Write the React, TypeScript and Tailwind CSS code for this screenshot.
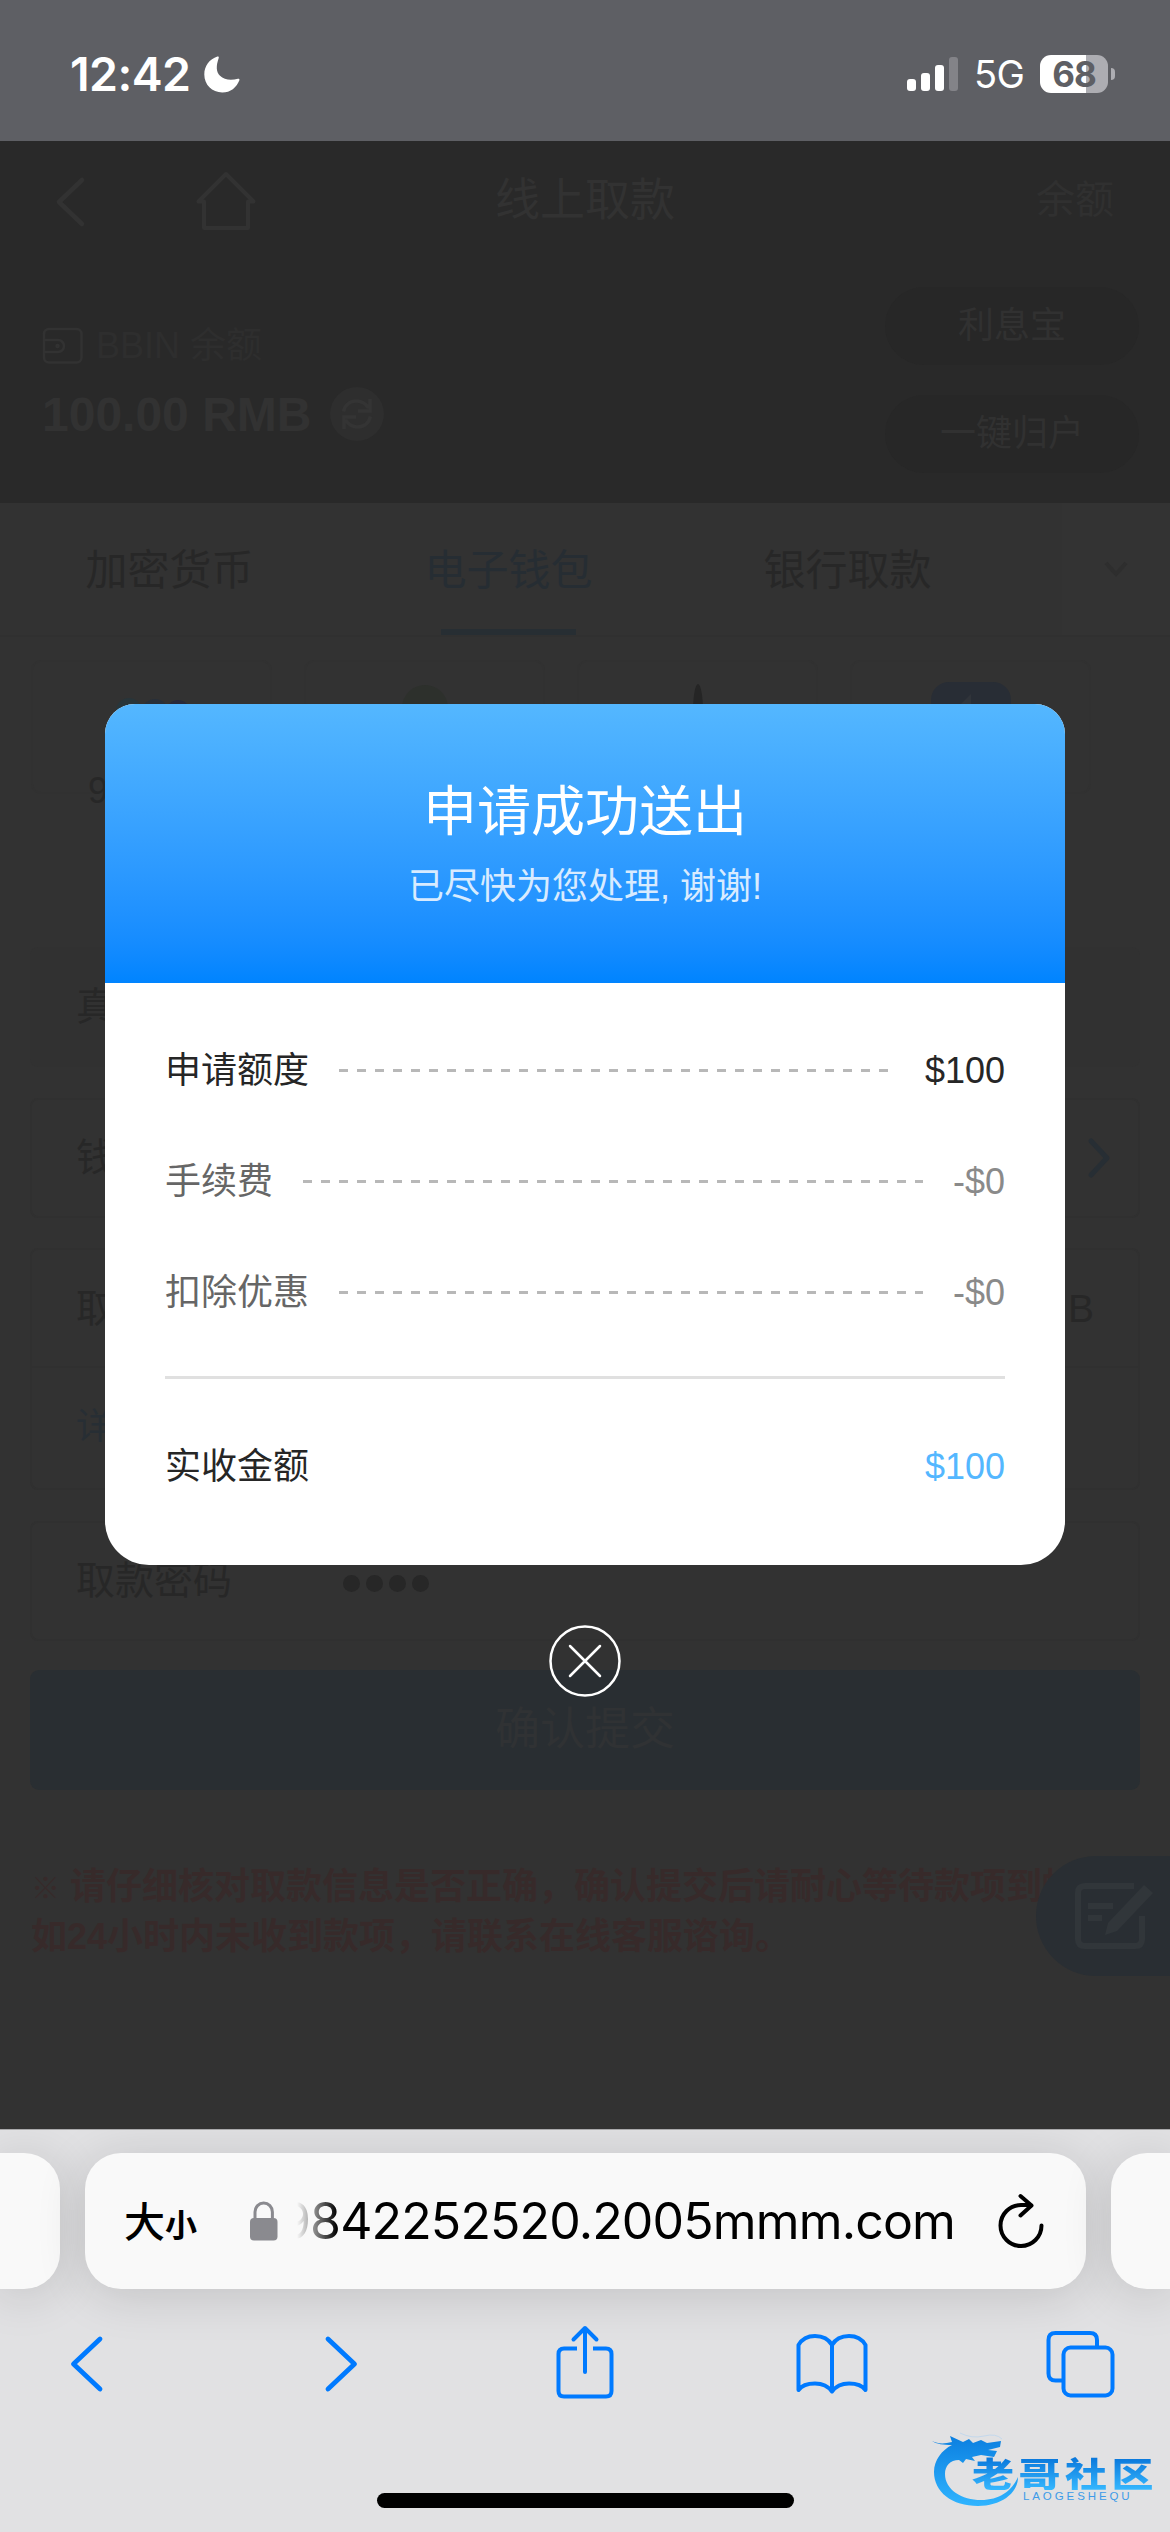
import React from 'react';

const tabs = ['加密货币', '电子钱包', '银行取款'];

const details = [
  { label: '申请额度', value: '$100', labelClass: 'text-[#262626]', valueClass: 'text-[#262626]' },
  { label: '手续费', value: '-$0', labelClass: 'text-[#666666]', valueClass: 'text-[#8a8a8a]' },
  { label: '扣除优惠', value: '-$0', labelClass: 'text-[#666666]', valueClass: 'text-[#8a8a8a]' },
];

const StatusBar: React.FC = () => (
  <header className="flex h-[141px] shrink-0 items-start justify-between bg-[#5e5f64] font-['Inter',sans-serif] text-white">
    <div className="flex items-center pl-[70px] pt-[50px]">
      <span className="w-[125px] text-[46.5px] font-semibold leading-[48px] tracking-[-0.6px]">12:42</span>
      <svg className="ml-[9px]" width="36" height="37" viewBox="0 0 36 37" fill="currentColor">
        <path d="M13.4.6c1-.4 1.700.3 1.300 1.300C12 10 12 15.500 16 19.800c4.300 4.300 11 5 18 3 1-.3 1.800.4 1.400 1.400C32.500 31.500 26.500 36.500 18.300 36.500 8 36.500.3 28.800.3 18.600.3 10 5.500 3.200 13.400.6z" />
      </svg>
    </div>
    <div className="flex items-center pr-[55px] pt-[50px]">
      <div className="mt-[-1px] flex h-[34px] items-end gap-[5px]">
        <i className="h-[12px] w-[9px] rounded-[3px] bg-white" />
        <i className="h-[18px] w-[9px] rounded-[3px] bg-white" />
        <i className="h-[26px] w-[9px] rounded-[3px] bg-white" />
        <i className="h-[34px] w-[9px] rounded-[3px] bg-[#838388]" />
      </div>
      <span className="ml-[16px] w-[66px] text-[38px] leading-[48px] tracking-[-0.5px]">5G</span>
      <div className="flex h-[38px] w-[68px] items-center justify-center rounded-[11px] bg-linear-to-r from-white from-[68%] to-[#adadb2] to-[68%] text-[35px] font-bold leading-[38px] tracking-[-1px] text-[#5e5f64]">
        68
      </div>
      <i className="ml-[3px] h-[12px] w-[4px] rounded-r-full bg-[#adadb2]" />
    </div>
  </header>
);

const AccountPanel: React.FC = () => (
  <div className="h-[362px] shrink-0 bg-[#292929] text-[#323232]">
    <div className="flex h-[116px] items-center">
      <svg className="ml-[55px] mt-[5px]" width="32" height="54" viewBox="0 0 32 54" fill="none" stroke="currentColor" strokeWidth="4.500" strokeLinecap="round" strokeLinejoin="round">
        <path d="M27 5 4 27l23 22" />
      </svg>
      <svg className="ml-[108px] mt-[4px]" width="62" height="60" viewBox="0 0 62 60" fill="none" stroke="currentColor" strokeWidth="4" strokeLinejoin="round">
        <path d="M31 3 3.500 30.500H9V57h44V30.500h5.500z" />
      </svg>
      <h1 className="ml-[238px] pt-[4px] text-[45px] leading-[60px]">线上取款</h1>
      <span className="ml-auto pr-[56px] pt-[2px] text-[39px] leading-[60px] text-[#303030]">余额</span>
    </div>
    <div className="flex justify-between pl-[42px] pr-[31px]">
      <div className="pt-[63px]">
        <div className="flex h-[52px] items-center text-[36px]">
          <svg width="42" height="38" viewBox="0 0 42 38" fill="none" stroke="currentColor" strokeWidth="2.500">
            <rect x="2" y="2" width="37.500" height="33.500" rx="5" />
            <path d="M2 13h14a6 6 0 0 1 0 12H2" />
            <circle cx="15.500" cy="19" r="1" />
          </svg>
          <span className="ml-[12px] leading-[52px] text-[#2e2e2e]">BBIN 余额</span>
        </div>
        <div className="mt-[14px] flex items-center">
          <span className="pt-[2px] text-[48px] font-bold leading-[54px]">100.00 RMB</span>
          <span className="ml-[19px] flex size-[54px] items-center justify-center rounded-full bg-[#2e2e2e]">
            <svg width="32" height="32" viewBox="0 0 32 32" fill="none" stroke="#343434" strokeWidth="3.500">
              <path d="M2.500 13.500C4 7 9 3 15.500 3c5 0 9 2.500 12 7M29 1v12H17" />
              <path d="M29.500 18.500C28 25 23 29 16.500 29c-5 0-9-2.500-12-7M3 31V19h12" />
            </svg>
          </span>
        </div>
      </div>
      <div className="flex flex-col gap-[30px] pt-[30px] text-center text-[36px] leading-[78px] text-[#313131]">
        <div className="h-[78px] w-[254px] rounded-full bg-[#272727]">利息宝</div>
        <div className="h-[78px] w-[254px] rounded-full bg-[#272727]">一键归户</div>
      </div>
    </div>
  </div>
);

const WalletTabs: React.FC = () => (
  <nav className="flex h-[134px] shrink-0 justify-between border-b-2 border-[#303030]">
    <div className="flex">
      {tabs.map((tab, i) => (
        <div
          key={tab}
          className={`flex w-[339px] flex-col items-center pt-[38px] text-[42px] leading-[60px] ${i === 1 ? 'text-[#262d33]' : 'text-[#272727]'}`}
        >
          {tab}
          {i === 1 && <i className="mt-[28px] h-[6px] w-[135px] bg-[#272e33]" />}
        </div>
      ))}
    </div>
    <div className="flex w-[108px] items-center justify-center bg-[#333333]">
      <svg width="24" height="16" viewBox="0 0 24 16" fill="none" stroke="#2e2e2e" strokeWidth="4">
        <path d="M2 2l10 11L22 2" />
      </svg>
    </div>
  </nav>
);

const WalletCards: React.FC = () => (
  <div className="flex h-[310px] shrink-0 items-start gap-[32px] pl-[31px] pt-[23px]">
    <div className="flex h-[134px] w-[241px] flex-col rounded-[10px] border-2 border-[#313131]">
      <svg className="ml-[82px] mt-[35px] shrink-0" width="76" height="44" viewBox="0 0 76 44">
        <circle cx="14" cy="14" r="13" fill="#28353a" />
        <circle cx="40" cy="15" r="13" fill="#28303a" />
        <circle cx="63" cy="15" r="12" fill="#28293a" />
      </svg>
      <span className="ml-[55px] mt-[24px] text-[36px] leading-[52px] text-[#272727]">988</span>
    </div>
    <div className="flex h-[134px] w-[241px] justify-center rounded-[10px] border-2 border-[#313131] pt-[23px]">
      <i className="size-[46px] rounded-full bg-[#2d302c]" />
    </div>
    <div className="flex h-[134px] w-[241px] justify-center rounded-[10px] border-2 border-[#313131] pt-[22px]">
      <svg width="20" height="50" viewBox="0 0 20 50" fill="#252525">
        <path d="M10 0c-3 0-5 14-5 27v23h10V27C15 14 13 0 10 0z" />
      </svg>
    </div>
    <div className="flex h-[134px] w-[241px] justify-center rounded-[10px] border-2 border-[#313131] pt-[20px]">
      <svg width="80" height="60" viewBox="0 0 80 60">
        <rect width="80" height="80" rx="18" fill="#282d35" />
        <path d="M40 12 22 30h18z" fill="#30343a" />
      </svg>
    </div>
  </div>
);

const WithdrawForm: React.FC = () => (
  <div className="flex flex-col px-[30px] text-[39px] text-[#272727]">
    <div className="h-[120px] rounded-[8px] bg-[#313131] pl-[46px] leading-[120px]">真</div>
    <div className="mt-[31px] flex h-[120px] items-center justify-between rounded-[8px] border-2 border-[#303030] pl-[44px] pr-[26px]">
      <span className="leading-[116px]">钱</span>
      <svg width="26" height="42" viewBox="0 0 26 42" fill="none" stroke="#272e34" strokeWidth="5" strokeLinecap="round" strokeLinejoin="round">
        <path d="M5 4l16 17L5 38" />
      </svg>
    </div>
    <div className="mt-[30px] h-[242px] rounded-[8px] border-2 border-[#303030]">
      <div className="flex h-[118px] justify-between border-b-2 border-[#303030] pl-[44px] pr-[44px] leading-[117px]">
        <span>取</span>
        <span>B</span>
      </div>
      <div className="pl-[44px] text-[36px] leading-[118px] text-[#272e34]">详</div>
    </div>
    <div className="mt-[31px] flex h-[120px] items-center rounded-[8px] border-2 border-[#303030] pl-[44px]">
      <span className="leading-[114px]">取款密码</span>
      <span className="ml-[111px] mt-[5px] flex gap-[6px]">
        <i className="size-[17px] rounded-full bg-[#272727]" />
        <i className="size-[17px] rounded-full bg-[#272727]" />
        <i className="size-[17px] rounded-full bg-[#272727]" />
        <i className="size-[17px] rounded-full bg-[#272727]" />
      </span>
    </div>
    <div className="mt-[29px] h-[120px] rounded-[9px] bg-[#292e32] text-center text-[45px] leading-[119px] text-[#303234]">确认提交</div>
  </div>
);

const SuccessModal: React.FC = () => (
  <div className="absolute inset-x-0 top-[704px] flex flex-col items-center">
    <div className="w-[960px] overflow-hidden rounded-t-[30px] rounded-b-[44px] bg-white">
      <div className="flex h-[279px] flex-col items-center bg-linear-to-b from-[#54b7ff] to-[#0084ff] pt-[72px]">
        <h2 className="text-[54px] leading-[72px] text-white">申请成功送出</h2>
        <p className="mt-[12px] text-[36px] leading-[54px] text-[#d8ebff]">已尽快为您处理, 谢谢!</p>
      </div>
      <div className="px-[60px] text-[36px]">
        <div className="flex flex-col pt-[32px]">
          {details.map((row) => (
            <div key={row.label} className="flex h-[111px] items-center">
              <span className={`leading-[54px] ${row.labelClass}`}>{row.label}</span>
              <i className="mx-[30px] h-[3px] flex-1 bg-[repeating-linear-gradient(90deg,#b8b8b8_0px,#b8b8b8_9px,transparent_9px,transparent_18px)]" />
              <span className={`leading-[54px] ${row.valueClass}`}>{row.value}</span>
            </div>
          ))}
        </div>
        <div className="mt-[28px] border-t-[3px] border-[#e0e0e0]" />
        <div className="flex h-[186px] items-center justify-between pb-[10px] text-[#262626]">
          <span className="leading-[54px]">实收金额</span>
          <span className="leading-[54px] text-[#54b7ff]">$100</span>
        </div>
      </div>
    </div>
    <svg className="mt-[60px]" width="72" height="72" viewBox="0 0 72 72" fill="none" stroke="white" strokeWidth="2.500" strokeLinecap="round">
      <circle cx="36" cy="36" r="34.500" />
      <path d="M21 21l30 30M51 21 21 51" />
    </svg>
  </div>
);

const BrowserBar: React.FC = () => (
  <footer className="flex flex-1 flex-col overflow-hidden border-t border-[#a9a9ab] bg-[#e1e1e3] font-['Inter','Noto_Sans_CJK_SC',sans-serif]">
    <div className="mt-[23px] flex h-[136px] shrink-0 justify-between">
      <div className="w-[60px] rounded-r-[36px] bg-[#f9f9f9] shadow-[0_6px_50px_rgba(0,0,0,0.14)]" />
      <div className="flex w-[1001px] items-center rounded-[36px] bg-[#f9f9f9] pl-[39px] text-black shadow-[0_6px_50px_rgba(0,0,0,0.14)]">
        <span className="flex w-[126px] items-baseline font-['Noto_Sans_CJK_SC',sans-serif] font-medium leading-[60px]">
          <span className="text-[41px]">大</span>
          <span className="text-[32px] font-bold">小</span>
        </span>
        <svg width="28" height="40" viewBox="0 0 28 40" fill="#8a8a8f">
          <rect x="0" y="17" width="27.500" height="22.500" rx="4" />
          <path d="M5 18V11a8.700 9 0 0 1 17.400 0v7" fill="none" stroke="#8a8a8f" strokeWidth="3" />
        </svg>
        <span className="ml-[19px] flex w-[658px] justify-end overflow-hidden whitespace-nowrap text-[50px] leading-[64px] tracking-[-0.85px] [mask-image:linear-gradient(90deg,transparent,black_40px)]">
          9842252520.2005mmm.com
        </span>
        <svg className="ml-[43px]" width="48" height="56" viewBox="0 0 48 56" fill="none" stroke="black" strokeWidth="4" strokeLinecap="round" strokeLinejoin="round">
          <path d="M43.500 32.500A20.500 20.500 0 1 1 23 12h10M22.500 3l11 9.500-11 10" />
        </svg>
      </div>
      <div className="w-[59px] rounded-l-[36px] bg-[#f9f9f9] shadow-[0_6px_50px_rgba(0,0,0,0.14)]" />
    </div>
    <div className="flex h-[150px] items-center pl-[69px] text-[#007aff]">
      <svg width="35" height="58" viewBox="0 0 35 58" fill="none" stroke="currentColor" strokeWidth="4.800" strokeLinecap="round" strokeLinejoin="round">
        <path d="M31 4 4.500 29 31 54" />
      </svg>
      <svg className="ml-[220px]" width="35" height="58" viewBox="0 0 35 58" fill="none" stroke="currentColor" strokeWidth="4.800" strokeLinecap="round" strokeLinejoin="round">
        <path d="M4 4l26.500 25L4 54" />
      </svg>
      <svg className="-mt-[4px] ml-[196px]" width="60" height="76" viewBox="0 0 60 76" fill="none" stroke="currentColor" strokeWidth="4" strokeLinecap="round" strokeLinejoin="round">
        <path d="M22 24.500H9q-5.500 0-5.500 5.500v37q0 5.500 5.500 5.500h42q5.500 0 5.500-5.500V30q0-5.500-5.500-5.500H38" strokeLinecap="butt" />
        <path d="M30 48V4M18.500 15.500 30 4l11.500 11.500" />
      </svg>
      <svg className="ml-[180px]" width="74" height="64" viewBox="0 0 74 64" fill="none" stroke="currentColor" strokeWidth="4" strokeLinecap="round" strokeLinejoin="round">
        <path d="M37 13v46M37 13C33 6 27 4 20 4S7 7 3.500 13v45C7 53 13 51.500 20 51.500S33 54 37 59.500M37 13C41 6 47 4 54 4s13 3 16.500 9v45C67 53 61 51.500 54 51.500S41 54 37 59.500" />
      </svg>
      <svg className="ml-[176px]" width="70" height="68" viewBox="0 0 70 68" fill="none" stroke="currentColor" strokeWidth="4">
        <path d="M17 50.500h-6.500q-7 0-7-7V10q0-7 7-7H45q7 0 7 7v7" />
        <rect x="18.500" y="17.500" width="49" height="48" rx="7" />
      </svg>
    </div>
  </footer>
);

const Watermark: React.FC = () => (
  <div className="absolute left-[930px] top-[2430px] h-[80px] w-[226px]">
    <svg className="absolute left-0 top-0" width="120" height="80" viewBox="0 0 120 80">
      <defs>
        <linearGradient id="ring" x1="0" y1="0" x2="0" y2="1">
          <stop offset="0" stopColor="#0b7fe0" />
          <stop offset="1" stopColor="#2fb4ff" />
        </linearGradient>
      </defs>
      <path d="M2 11c6 3 12 3 20 1L20 6l13 6 6-3 4 4 8-3 6 3 14-2-1 6-12 3 9 1-3 6-13-2-9 2 3 4-9-2-3 4-4-3C20 30 15 36 15 44c0 16 17 26 36 26 18 0 31-9 37-23 0 17-18 29-40 29C22 76 4 62 4 42 4 30 12 20 22 15 14 15 6 14 2 11z" fill="url(#ring)" />
      <path d="M30 3Q42 9 54 6t18 3" stroke="#c3d8ec" fill="none" />
    </svg>
    <div className="absolute left-[42px] top-[25px] origin-top scale-y-[0.8] whitespace-nowrap bg-linear-to-b from-[#0672d8] to-[#36b8ff] bg-clip-text font-['Noto_Sans_CJK_SC',sans-serif] text-[42px] font-black leading-[44px] tracking-[4.500px] text-transparent">
      老哥社区
    </div>
    <div className="absolute left-[93px] top-[59px] font-['Liberation_Sans',sans-serif] text-[11.500px] leading-[14px] tracking-[2.900px] text-[#3d9be8]">LAOGESHEQU</div>
  </div>
);

const App: React.FC = () => {
  return (
    <div className="relative flex h-[2532px] w-[1170px] flex-col overflow-hidden bg-[#323232] font-['Liberation_Sans','Noto_Sans_CJK_SC',sans-serif]">
      <StatusBar />
      <main className="flex h-[1988px] shrink-0 flex-col overflow-hidden">
        <AccountPanel />
        <WalletTabs />
        <WalletCards />
        <WithdrawForm />
        <p className="mt-[73px] whitespace-nowrap pl-[31px] text-[36px] font-bold leading-[48px] text-[#372a2a]">
          <span className="inline-block w-[39px] text-[29px]">※</span>请仔细核对取款信息是否正确，确认提交后请耐心等待款项到帐
          <br />
          如24小时内未收到款项，请联系在线客服谘询。
        </p>
      </main>
      {/* floating feedback button */}
      <div className="absolute right-0 top-[1856px] flex h-[120px] w-[134px] items-center rounded-l-full bg-[#292e33] pl-[38px]">
        <svg width="82" height="72" viewBox="0 0 82 72" fill="none" stroke="#31363a" strokeWidth="6">
          <path d="M60 6H11q-7 0-7 7v46q0 7 7 7h50q7 0 7-7V36M14 26h25M14 38h14" />
          <path d="M70 5l9 8-36 38-12 4 3-12z" fill="#31363a" stroke="none" />
        </svg>
      </div>
      <SuccessModal />
      <BrowserBar />
      <Watermark />
      {/* home indicator */}
      <div className="absolute left-[377px] top-[2493px] h-[15px] w-[417px] rounded-full bg-black" />
    </div>
  );
};

export default App;
